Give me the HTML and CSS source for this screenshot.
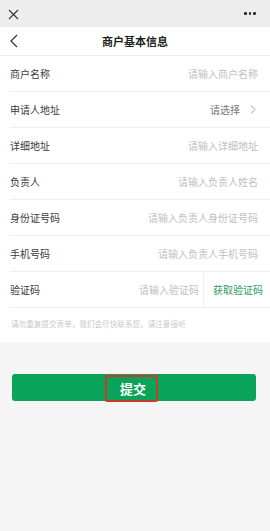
FILE: index.html
```html
<!DOCTYPE html>
<html lang="zh-CN">
<head>
    <meta charset="UTF-8">
    <meta name="viewport" content="width=device-width, initial-scale=1.0">
    <title>商户基本信息</title>
    <link rel="stylesheet" href="styles.css">
</head>
<body>
    <div class="topbar">
        <svg class="close-icon" width="11" height="11" viewBox="0 0 11 11">
            <path d="M1 1 L10 10 M10 1 L1 10" stroke="#333" stroke-width="1.1" fill="none"/>
        </svg>
        <div class="dots"><span></span><span></span><span></span></div>
    </div>

    <div class="navbar">
        <svg class="back-icon" width="8" height="14" viewBox="0 0 8 14">
            <path d="M7 1 L1 7 L7 13" stroke="#333" stroke-width="1.2" fill="none"/>
        </svg>
        <h1>商户基本信息</h1>
    </div>

    <div class="form">
        <div class="row">
            <label>商户名称</label>
            <span class="placeholder">请输入商户名称</span>
        </div>
        <div class="row">
            <label>申请人地址</label>
            <span class="select">请选择
                <svg width="6" height="9" viewBox="0 0 6 9">
                    <path d="M1 0.5 L5 4.5 L1 8.5" stroke="#999" stroke-width="1" fill="none"/>
                </svg>
            </span>
        </div>
        <div class="row">
            <label>详细地址</label>
            <span class="placeholder">请输入详细地址</span>
        </div>
        <div class="row">
            <label>负责人</label>
            <span class="placeholder">请输入负责人姓名</span>
        </div>
        <div class="row">
            <label>身份证号码</label>
            <span class="placeholder">请输入负责人身份证号码</span>
        </div>
        <div class="row">
            <label>手机号码</label>
            <span class="placeholder">请输入负责人手机号码</span>
        </div>
        <div class="row code-row">
            <label>验证码</label>
            <span class="placeholder code-input">请输入验证码</span>
            <span class="get-code">获取验证码</span>
        </div>
        <p class="hint">请勿重复提交表单，我们会尽快联系您，请注意接听</p>
    </div>

    <div class="actions">
        <button class="submit-btn"><span class="mark">提交</span></button>
    </div>
</body>
</html>
```

FILE: styles.css
```css
* {
    margin: 0;
    padding: 0;
    box-sizing: border-box;
}

body {
    font-family: "Noto Sans CJK SC", "Noto Sans", sans-serif;
    background-color: #f5f5f5;
    color: #333;
    width: 270px;
    height: 531px;
    overflow: hidden;
}

.topbar {
    height: 27px;
    background: #ededed;
    display: flex;
    justify-content: space-between;
    align-items: center;
    padding: 0 14px 0 8px;
}

.close-icon {
    display: block;
    margin-top: 1px;
}

.dots {
    display: flex;
    gap: 2px;
}

.dots span {
    width: 2.6px;
    height: 2.6px;
    border-radius: 50%;
    background: #222;
}

.navbar {
    height: 29px;
    background: #fff;
    border-bottom: 1px solid #eee;
    display: flex;
    align-items: center;
    position: relative;
    padding-left: 10px;
}

.navbar h1 {
    position: absolute;
    left: 0;
    right: 0;
    text-align: center;
    font-size: 11px;
    font-weight: bold;
    color: #222;
}

.back-icon {
    display: block;
}

.form {
    background: #fff;
}

.row {
    height: 36px;
    margin-left: 10px;
    padding-right: 12px;
    border-bottom: 1px solid #efefef;
    display: flex;
    align-items: center;
    justify-content: space-between;
    font-size: 10px;
}

.row label {
    color: #3a3a3a;
}

.placeholder {
    color: #c0c0c0;
}

.select {
    color: #777;
    display: flex;
    align-items: center;
    gap: 10px;
    padding-right: 2px;
}

.select svg {
    display: block;
}

.code-row {
    padding-right: 0;
}

.code-input {
    margin-left: auto;
    padding-right: 4px;
}

.get-code {
    height: 100%;
    display: flex;
    align-items: center;
    border-left: 1px solid #efefef;
    padding: 0 7px 0 9px;
    color: #2a9d5c;
}

.hint {
    height: 34px;
    line-height: 32px;
    padding-left: 11px;
    font-size: 7.6px;
    color: #cacaca;
}

.actions {
    padding: 32px 14px 0 12px;
}

.submit-btn {
    width: 100%;
    height: 27px;
    border: none;
    border-radius: 3px;
    background: #0aa35a;
    color: #fff;
    font-family: inherit;
    display: flex;
    justify-content: center;
    align-items: center;
}

.mark {
    width: 53px;
    height: 27px;
    border: 2px solid #c93a2c;
    border-radius: 2px;
    display: flex;
    justify-content: center;
    align-items: center;
    padding-left: 4px;
    font-size: 13px;
    font-weight: bold;
    margin-left: -6px;
    margin-top: 2px;
}
```
